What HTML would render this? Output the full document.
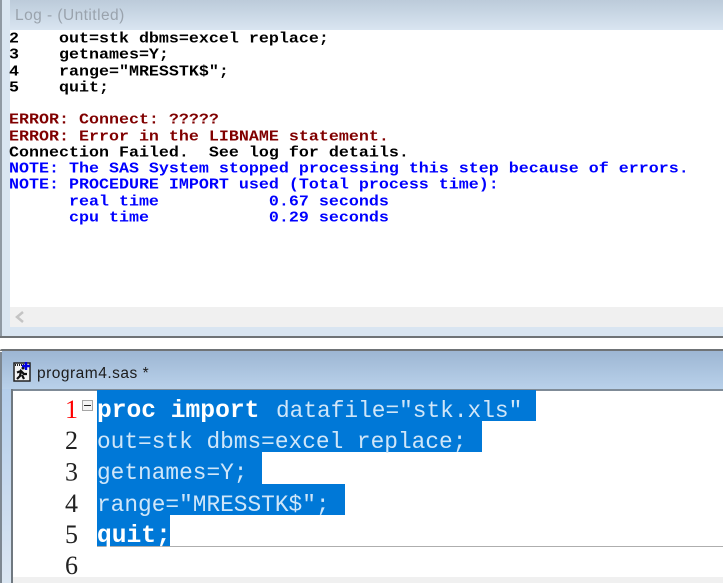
<!DOCTYPE html>
<html><head><meta charset="utf-8"><style>
html,body{margin:0;padding:0;background:#fff}
#r{position:relative;width:723px;height:583px;overflow:hidden;background:#fff}
#r div{position:absolute}
.l{left:9px;font:bold 16.67px/16px "Liberation Mono",monospace;white-space:pre;height:16px;transform:scaleY(.86);transform-origin:0 50%}
.k{color:#000}.e{color:#800000}.n{color:#0000ff}
svg{position:absolute;left:0;top:0}
</style></head><body><div id="r">
<div style="left:0;top:0;width:723px;height:30px;background:linear-gradient(#bccbda,#d9e5f1)"></div>
<div style="left:0;top:0;width:10px;height:337px;background:#d9e5f1"></div>
<div style="left:15px;top:7px;font:15.5px/18px 'Liberation Sans',sans-serif;letter-spacing:.45px;color:#9aa3ad">Log - (Untitled)</div>
<div style="left:10px;top:30px;width:713px;height:277px;background:#fff"></div>
<div style="left:10px;top:307px;width:713px;height:20px;background:#f0f0f0"></div>
<div style="left:0;top:327px;width:723px;height:10px;background:#d9e5f1"></div>
<div style="left:0;top:0;width:2px;height:337px;background:#8f99a3"></div>
<svg width="723" height="583" style="z-index:1"><path d="M23 312l-6 5l6 5" fill="none" stroke="#c4c4c4" stroke-width="2.500"/></svg>
<div style="left:0;top:336px;width:723px;height:2px;background:#6f7376"></div>
<div style="left:0;top:349px;width:723px;height:2px;background:#6f7376;border-top-left-radius:3px"></div>
<div style="left:2px;top:351px;width:721px;height:38px;background:linear-gradient(#9db6d3,#b9d1ea)"></div>
<div style="left:0;top:352px;width:2px;height:231px;background:#7d8791"></div>
<div style="left:2px;top:389px;width:10px;height:194px;background:linear-gradient(#b4cdea,#dbe6f2)"></div>
<div style="left:11px;top:389px;width:712px;height:2px;background:#7f8b97"></div>
<div style="left:11px;top:389px;width:2px;height:194px;background:#6f7880"></div>
<div style="left:37px;top:365px;font:15.5px/18px 'Liberation Sans',sans-serif;letter-spacing:.5px;color:#1c1c1c">program4.sas *</div>

<div class="l k" style="top:32px">2    out=stk dbms=excel replace;</div>
<div class="l k" style="top:48px">3    getnames=Y;</div>
<div class="l k" style="top:65px">4    range="MRESSTK$";</div>
<div class="l k" style="top:81px">5    quit;</div>
<div class="l e" style="top:113px">ERROR: Connect: ?????</div>
<div class="l e" style="top:130px">ERROR: Error in the LIBNAME statement.</div>
<div class="l k" style="top:146px">Connection Failed.  See log for details.</div>
<div class="l n" style="top:162px">NOTE: The SAS System stopped processing this step because of errors.</div>
<div class="l n" style="top:178px">NOTE: PROCEDURE IMPORT used (Total process time):</div>
<div class="l n" style="top:195px">      real time           0.67 seconds</div>
<div class="l n" style="top:211px">      cpu time            0.29 seconds</div>

<div style="left:97px;top:390px;width:439px;height:31px;background:#0078d7"></div>
<div style="left:97px;top:421px;width:385px;height:31px;background:#0078d7"></div>
<div style="left:97px;top:452px;width:165px;height:32px;background:#0078d7"></div>
<div style="left:97px;top:484px;width:248px;height:31px;background:#0078d7"></div>
<div style="left:97px;top:515px;width:73px;height:31px;background:#0078d7"></div>
<div style="left:97px;top:546px;width:626px;height:1px;background:#aeaeae"></div>
<div style="left:13px;top:577px;width:710px;height:6px;background:#f0f0f0"></div>
<div style="left:82px;top:400px;width:9px;height:9px;border:1px solid #a6a6a6;background:#f4f4f4"></div>
<div style="left:84px;top:405px;width:7px;height:1px;background:#222"></div>

<svg width="723" height="583" style="z-index:2">
<g fill="none">
<rect x="14" y="363" width="16" height="18" fill="#f4f4f4" stroke="#222" stroke-width="1.500"/>
<path d="M15 365h11" stroke="#222" stroke-dasharray="1 1" stroke-width="2"/>
<path d="M17 379l3-3 1-5 3 3 3 0M21 371l-4 1.500M22 375l2 4" stroke="#111" stroke-width="2.200"/>
<circle cx="23" cy="368" r="1.500" fill="#111"/>
<path d="M26 362v8M22 366h8" stroke="#0000e0" stroke-width="2.400"/>
</g>
<g font-family="'Liberation Serif',serif" font-size="26" text-anchor="end" fill="#222">
<text x="78" y="418" fill="#f00">1</text>
<text x="78" y="449">2</text>
<text x="78" y="480.500">3</text>
<text x="78" y="512">4</text>
<text x="78" y="543">5</text>
<text x="78" y="574">6</text>
</g>
<g font-family="'Liberation Mono',monospace" font-size="22.800" fill="#cfe6f9" xml:space="preserve">
<text font-weight="bold" fill="#fff" font-size="24.600" x="97" y="417">proc import</text>
<text x="276" y="417">datafile=″stk.xls″</text>
<text x="97" y="448">out=stk dbms=excel replace;</text>
<text x="97" y="479">getnames=Y;</text>
<text x="97" y="511">range=″MRESSTK$″;</text>
<text font-weight="bold" fill="#fff" font-size="24.600" x="97" y="542">quit;</text>
</g>
</svg>
</div></body></html>
